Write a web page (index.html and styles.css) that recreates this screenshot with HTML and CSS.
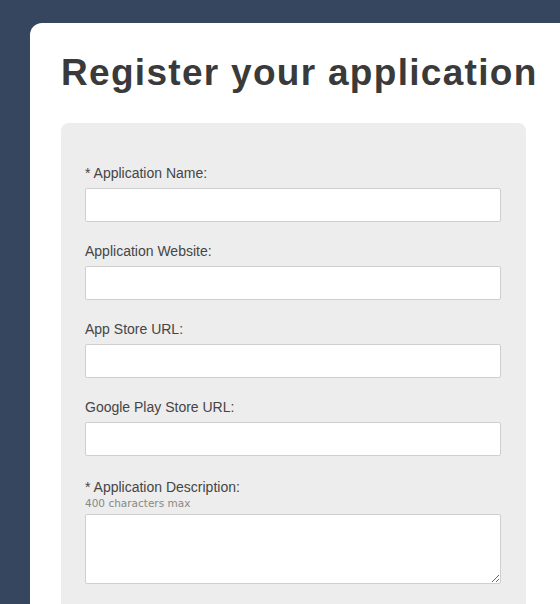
FILE: index.html
```html
<!DOCTYPE html>
<html>
<head>
<meta charset="utf-8">
<link rel="stylesheet" href="styles.css">
</head>
<body>
<div class="card">
  <h1 class="title">Register your application</h1>
  <form class="panel">
    <div class="field">
      <label class="label">* Application Name:</label>
      <input class="input" type="text">
    </div>
    <div class="field">
      <label class="label">Application Website:</label>
      <input class="input" type="text">
    </div>
    <div class="field">
      <label class="label">App Store URL:</label>
      <input class="input" type="text">
    </div>
    <div class="field">
      <label class="label">Google Play Store URL:</label>
      <input class="input" type="text">
    </div>
    <div class="field field-desc">
      <label class="label">* Application Description:</label>
      <span class="hint">400 characters max</span>
      <textarea class="textarea"></textarea>
    </div>
  </form>
</div>
</body>
</html>
```
FILE: styles.css
```css
html, body {
  margin: 0;
  height: 100%;
  overflow: hidden;
}
body {
  background: #35465e;
  padding: 23px 0 0 30px;
  box-sizing: border-box;
  font-family: "Liberation Sans", Arial, sans-serif;
}
.card {
  background: #fff;
  width: 560px;
  height: 700px;
  border-radius: 12px 0 0 0;
  padding: 31px;
  box-sizing: border-box;
}
.title {
  margin: 0;
  font-size: 37px;
  line-height: 37px;
  font-weight: bold;
  letter-spacing: 1.3px;
  color: #3a3a3a;
}
.panel {
  margin-top: 32px;
  width: 465px;
  box-sizing: border-box;
  background: #ededed;
  border-radius: 8px;
  padding: 42px 25px 40px 24px;
  display: flex;
  flex-direction: column;
  gap: 21px;
}
.field {
  display: flex;
  flex-direction: column;
}
.field-desc {
  margin-top: 2px;
}
.label {
  font-size: 14px;
  line-height: 17px;
  color: #454545;
  margin-bottom: 6px;
}
.hint {
  font-family: "DejaVu Sans", sans-serif;
  font-size: 10.5px;
  line-height: 13px;
  color: #888;
  margin-top: -5px;
  margin-bottom: 4px;
}
.input, .textarea {
  display: block;
  width: 416px;
  box-sizing: border-box;
  border: 1px solid #cfcfcf;
  border-radius: 2px;
  background: #fff;
  margin: 0;
  font: inherit;
}
.input {
  height: 34px;
}
.textarea {
  height: 70px;
}
```
